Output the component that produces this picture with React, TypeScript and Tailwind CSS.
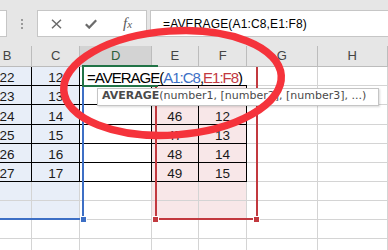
import React from 'react';
import clsx from 'clsx';

const columns = [
  { key: 'B', width: 'w-[51px]' },
  { key: 'C', width: 'w-[50px]' },
  { key: 'D', width: 'w-[74px]' },
  { key: 'E', width: 'w-[49px]' },
  { key: 'F', width: 'w-[50px]' },
  { key: 'G', width: 'w-[73px]' },
  { key: 'H', width: 'w-[73px]' },
];

const rowHeights = ['h-[19px]', 'h-[19px]', 'h-[20px]', 'h-[19px]', 'h-[19px]', 'h-[19px]', 'h-[19px]', 'h-[19px]', 'h-[19px]', 'h-[19px]'];

// E1:F2 sit under the cell editor and the tooltip, so they stay empty here
const data: Record<string, (number | null)[]> = {
  B: [22, 23, 24, 25, 26, 27],
  C: [12, 13, 14, 15, 16, 17],
  E: [null, null, 46, 47, 48, 49],
  F: [null, null, 12, 13, 14, 15],
};

const cellClass = (col: string, row: number) => {
  const inTable = row <= 6 && ['B', 'C', 'D', 'E', 'F'].includes(col);
  const blue = row <= 8 && (col === 'B' || col === 'C');
  const red = row <= 8 && (col === 'E' || col === 'F');
  return clsx(
    'flex items-end justify-center border-r border-b leading-[14px] text-[13.5px] text-[#1a1a1a]',
    inTable ? 'border-black' : 'border-[#d4d4d4]',
    blue ? 'bg-[#e8eef8]' : red ? 'bg-[#f8e7e8]' : 'bg-white'
  );
};

const FormulaToolbar: React.FC = () => (
  <div className="flex h-[46px] bg-[#e6e6e6] pt-[10px]">
    {/* name box, cut off on the left */}
    <div className="h-[27px] w-[7px] border border-l-0 border-[#c6c6c6] bg-white" />
    <div className="flex h-[27px] w-[30px] flex-col items-center justify-center gap-[2px]">
      <span className="h-[2px] w-[2px] bg-[#9a9a9a]" />
      <span className="h-[2px] w-[2px] bg-[#9a9a9a]" />
      <span className="h-[2px] w-[2px] bg-[#9a9a9a]" />
    </div>
    <div className="flex h-[27px] w-[110px] items-center border border-[#c6c6c6] bg-white">
      <svg width="11" height="10" viewBox="0 0 11 10" className="ml-[13px]">
        <path d="M1 0.8 L10 9.2 M10 0.8 L1 9.2" stroke="#6b6b6b" strokeWidth="1.5" fill="none" />
      </svg>
      <svg width="12" height="10" viewBox="0 0 12 10" className="ml-[23px]">
        <path d="M0.8 5.2 L4.2 8.6 L11.2 1.2" stroke="#6b6b6b" strokeWidth="2.2" fill="none" />
      </svg>
      <span className="ml-[26px] font-['Liberation_Serif',serif] text-[15px] italic leading-none text-[#5a5a5a]">
        f<span className="text-[11px]">x</span>
      </span>
    </div>
    <div className="ml-[3px] flex h-[27px] flex-1 items-center border border-r-0 border-[#c6c6c6] bg-white pl-[12px] text-[12px] tracking-[0.15px] text-black">
      =AVERAGE(A1:C8,E1:F8)
    </div>
  </div>
);

const Sheet: React.FC = () => (
  <div className="ml-[-17px] flex flex-col">
    <div className="flex h-[21px] bg-[#e6e6e6]">
      {columns.map(col => (
        <div
          key={col.key}
          className={clsx(
            col.width,
            'flex items-center justify-center border-r border-b border-[#bcbcbc] text-[13px]',
            col.key === 'D' ? 'bg-[#d3d3d3] text-[#2e5e3a]' : 'text-[#444]'
          )}
        >
          {col.key}
        </div>
      ))}
    </div>
    {rowHeights.map((h, i) => {
      const row = i + 1;
      return (
        <div key={row} className={clsx('flex', h)}>
          {columns.map(col => (
            <div key={col.key} className={clsx(col.width, cellClass(col.key, row))}>
              {data[col.key] && row <= 6 ? data[col.key][row - 1] ?? '' : ''}
            </div>
          ))}
        </div>
      );
    })}
  </div>
);

const App: React.FC = () => {
  return (
    <div className="relative h-[250px] w-[388px] overflow-hidden bg-white font-['Liberation_Sans',Arial,sans-serif]">
      <FormulaToolbar />
      <Sheet />

      {/* range highlight A1:C8 */}
      <div className="absolute left-[82px] top-[86px] h-[134px] w-[2px] bg-[#3d6fc5]" />
      <div className="absolute left-0 top-[218px] h-[2px] w-[84px] bg-[#3d6fc5]" />
      <div className="absolute left-[80px] top-[216px] h-[7px] w-[7px] border border-white bg-[#3d6fc5]" />

      {/* range highlight E1:F8 */}
      <div className="absolute left-[155px] top-[86px] h-[134px] w-[2px] bg-[#c2393f]" />
      <div className="absolute left-[256px] top-[67px] h-[153px] w-[2px] bg-[#c2393f]" />
      <div className="absolute left-[155px] top-[218px] h-[2px] w-[103px] bg-[#c2393f]" />
      <div className="absolute left-[152px] top-[216px] h-[7px] w-[7px] border border-white bg-[#c2393f]" />
      <div className="absolute left-[253px] top-[216px] h-[7px] w-[7px] border border-white bg-[#c2393f]" />

      {/* cell editor in D1 */}
      <div className="absolute left-[82px] top-[65px] h-[22px] w-[76px] border-b-2 border-l-2 border-t-2 border-[#217346]" />
      <div className="absolute left-[84px] top-[67px] h-[18px] w-[171px] bg-white pl-[3px] pt-[2px] text-[15px] leading-[17px] tracking-[-1px] whitespace-nowrap text-black">
        =AVERAGE(<span className="text-[#3d6fc5]">A1:C8</span>,<span className="text-[#c2393f]">E1:F8</span>)
      </div>

      {/* function tooltip */}
      <div className="absolute left-[97px] top-[88px] h-[18px] w-[282px] border border-[#c5c5c5] bg-white pl-[4px] font-['DejaVu_Sans',sans-serif] text-[11px] leading-[14px] whitespace-nowrap text-[#4a4a4a] shadow-[1px_1px_2px_rgba(0,0,0,0.15)]">
        <span className="font-bold">AVERAGE</span>(number1, [number2], [number3], ...)
      </div>

      {/* hand-drawn red circle */}
      <svg className="pointer-events-none absolute inset-0" width="388" height="250" viewBox="0 0 388 250">
        <ellipse cx="172.5" cy="83" rx="109" ry="52" transform="rotate(-4 172.5 83)" fill="none" stroke="#f5333b" strokeWidth="7.5" />
      </svg>
    </div>
  );
};

export default App;
